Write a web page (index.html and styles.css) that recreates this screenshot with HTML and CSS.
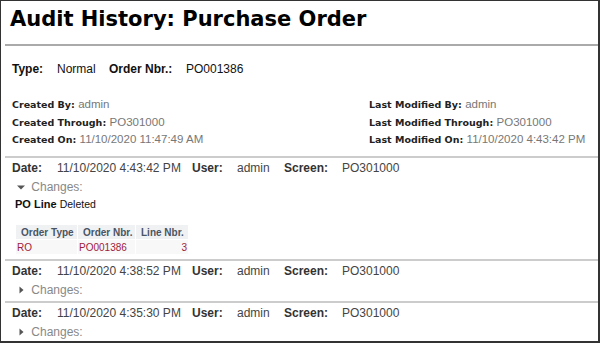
FILE: index.html
```html
<!DOCTYPE html>
<html lang="en">
<head>
    <meta charset="UTF-8">
    <meta name="viewport" content="width=device-width, initial-scale=1.0">
    <title>Audit History</title>
    <link rel="stylesheet" href="styles.css">
</head>
<body>
    <div class="page">
        <h1 class="title">Audit History: Purchase Order</h1>

        <div class="summary">
            <div class="doc-row">
                <span class="doc-label type-label">Type:</span><span class="doc-value type-value">Normal</span><span class="doc-label nbr-label">Order Nbr.:</span><span class="doc-value">PO001386</span>
            </div>

            <div class="meta">
                <div class="meta-col">
                    <div><span class="meta-label">Created By:</span> <span class="meta-value">admin</span></div>
                    <div><span class="meta-label">Created Through:</span> <span class="meta-value">PO301000</span></div>
                    <div><span class="meta-label">Created On:</span> <span class="meta-value">11/10/2020 11:47:49 AM</span></div>
                </div>
                <div class="meta-col">
                    <div><span class="meta-label">Last Modified By:</span> <span class="meta-value">admin</span></div>
                    <div><span class="meta-label">Last Modified Through:</span> <span class="meta-value">PO301000</span></div>
                    <div><span class="meta-label">Last Modified On:</span> <span class="meta-value">11/10/2020 4:43:42 PM</span></div>
                </div>
            </div>
        </div>

        <!-- entry 1 (expanded) -->
        <div class="entry">
            <div class="entry-head">
                <span class="head-label date-label">Date:</span><span class="head-value date-value">11/10/2020 4:43:42 PM</span><span class="head-label user-label">User:</span><span class="head-value user-value">admin</span><span class="head-label screen-label">Screen:</span><span class="head-value">PO301000</span>
            </div>
            <div class="changes">
                <svg class="arrow" width="8" height="8" viewBox="0 0 8 8"><path d="M0 2.5 L8 2.5 L4 6.5 Z" fill="#555"/></svg>
                Changes:
            </div>
            <div class="change-title"><b>PO Line</b> <span class="change-state">Deleted</span></div>
            <table class="keys">
                <tr><th class="col-type">Order Type</th><th class="col-nbr">Order Nbr.</th><th class="col-line">Line Nbr.</th></tr>
                <tr><td>RO</td><td>PO001386</td><td class="num">3</td></tr>
            </table>
        </div>

        <div class="entry">
            <div class="entry-head">
                <span class="head-label date-label">Date:</span><span class="head-value date-value">11/10/2020 4:38:52 PM</span><span class="head-label user-label">User:</span><span class="head-value user-value">admin</span><span class="head-label screen-label">Screen:</span><span class="head-value">PO301000</span>
            </div>
            <div class="changes">
                <svg class="arrow" width="8" height="8" viewBox="0 0 8 8"><path d="M2.5 0.5 L6.5 4 L2.5 7.5 Z" fill="#555"/></svg>
                Changes:
            </div>
        </div>

        <div class="entry">
            <div class="entry-head">
                <span class="head-label date-label">Date:</span><span class="head-value date-value">11/10/2020 4:35:30 PM</span><span class="head-label user-label">User:</span><span class="head-value user-value">admin</span><span class="head-label screen-label">Screen:</span><span class="head-value">PO301000</span>
            </div>
            <div class="changes">
                <svg class="arrow" width="8" height="8" viewBox="0 0 8 8"><path d="M2.5 0.5 L6.5 4 L2.5 7.5 Z" fill="#555"/></svg>
                Changes:
            </div>
        </div>
    </div>
</body>
</html>
```

FILE: styles.css
```css
    body {
        margin: 0;
        font-family: "Liberation Sans", Arial, sans-serif;
        font-size: 12px;
        background: #fff;
    }

    .page {
        box-sizing: border-box;
        width: 600px;
        height: 343px;
        overflow: hidden;
        border: 1px solid #333;
        border-right-width: 2px;
        border-bottom-width: 2px;
    }

    .title {
        margin: 0 0 0 4px;
        padding: 6px 0 0 5px;
        height: 37px;
        font-family: "DejaVu Sans", Verdana, sans-serif;
        font-size: 21px;
        font-weight: bold;
        color: #000;
        border-bottom: 2px solid #aaa;
    }

    .summary {
        padding: 0 0 0 11px;
        height: 110px;
    }

    .doc-row {
        padding-top: 15px;
        line-height: 16px;
        color: #111;
    }
    .doc-label, .doc-value {
        display: inline-block;
    }
    .doc-label {
        font-weight: bold;
    }
    .type-label { width: 45px; }
    .type-value { width: 52px; }
    .nbr-label { width: 77px; }

    .meta {
        display: flex;
        margin-top: 19px;
    }
    .meta-col {
        flex: none;
        width: 357px;
        line-height: 16.5px;
    }
    .meta-col + .meta-col {
        flex: 1;
        width: auto;
    }
    .meta-label {
        font-family: "DejaVu Sans", Verdana, sans-serif;
        font-size: 9.5px;
        font-weight: bold;
        color: #222;
    }
    .meta-value {
        font-size: 11.5px;
        color: #777;
    }

    .entry {
        margin-left: 4px;
        border-top: 2px solid #ccc;
        padding: 0 0 1px 7px;
    }
    .entry-head {
        height: 20px;
        line-height: 20px;
        color: #444;
        white-space: nowrap;
    }
    .head-label, .head-value {
        display: inline-block;
    }
    .head-label {
        font-weight: bold;
        color: #333;
    }
    .date-label { width: 45px; }
    .date-value { width: 135px; }
    .user-label { width: 45px; }
    .user-value { width: 47px; }
    .screen-label { width: 58px; }

    .changes {
        height: 19px;
        line-height: 19px;
        color: #888;
        padding-left: 5px;
    }
    .arrow {
        margin-right: 3px;
    }
    .change-title {
        padding-left: 3px;
        font-size: 11px;
        line-height: 14px;
        color: #111;
    }
    .change-state {
        font-size: 10.5px;
    }

    table.keys {
        margin: 13px 0 3px 3px;
        border-collapse: collapse;
        font-size: 10px;
    }
    table.keys th {
        background: #f0f1f3;
        color: #4a5563;
        border: 1px solid #fff;
        padding: 0 0 0 5px;
        height: 14px;
        text-align: left;
    }
    .col-type { width: 56px; }
    .col-nbr { width: 52px; }
    .col-line { width: 47px; }
    table.keys td {
        background: #f8f8f8;
        color: #a0203c;
        border: 1px solid #fff;
        padding: 0 1px;
        height: 14px;
    }
    table.keys td.num {
        text-align: right;
    }
```
